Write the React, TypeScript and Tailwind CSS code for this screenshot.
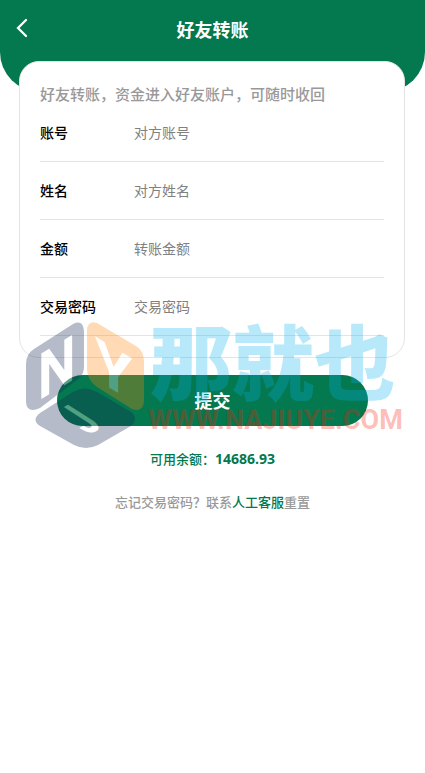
import React from "react";

type Field = { id: string; label: string; placeholder: string; type: string };

const fields: Field[] = [
  { id: "account", label: "账号", placeholder: "对方账号", type: "text" },
  { id: "name", label: "姓名", placeholder: "对方姓名", type: "text" },
  { id: "amount", label: "金额", placeholder: "转账金额", type: "text" },
  { id: "password", label: "交易密码", placeholder: "交易密码", type: "password" },
];

function Header() {
  return (
    <header className="h-[92px] rounded-b-[40px] bg-[#04784e] text-white">
      <div className="grid h-[60px] grid-cols-[48px_1fr_48px] items-center">
        <button type="button" aria-label="返回" className="flex h-10 items-center pb-1 pl-4">
          <svg width="12" height="20" viewBox="0 0 12 20" fill="none" stroke="currentColor" strokeWidth="2.3">
            <path d="M10 2 2 10l8 8" strokeLinecap="round" />
          </svg>
        </button>
        <h1 className="text-center text-lg font-bold">好友转账</h1>
      </div>
    </header>
  );
}

function FieldRow({ field }: { field: Field }) {
  return (
    <div className="flex h-[58px] items-start border-b border-[#e4e4e4] pt-[19px]">
      <label htmlFor={field.id} className="w-[94px] shrink-0 text-sm leading-5 font-medium text-black">
        {field.label}
      </label>
      <input
        id={field.id}
        type={field.type}
        placeholder={field.placeholder}
        className="h-5 min-w-0 flex-1 bg-transparent text-sm leading-5 outline-none placeholder:text-[#808080]"
      />
    </div>
  );
}

function CubeLogo() {
  return (
    <svg width="120" height="128" viewBox="0 0 120 128" opacity="0.3" fontFamily="Roboto, sans-serif" fontWeight="700">
      <path d="M8 27 L47 2 Q57-3 58 9 V45 Q58 53 51 58 L14 86 Q1 92 0 80 V42 Q0 32 8 27Z" fill="#122353" />
      <path d="M71 1 L110 24 Q118 29 118 40 V78 Q118 91 106 87 L71 65 Q61 58 61 47 V8 Q62-2 71 1Z" fill="#ff880c" />
      <path d="M14 91 L47 70 Q59 63 71 70 L105 90 Q113 97 105 104 L72 123 Q60 129 48 123 L14 104 Q5 98 14 91Z" fill="#122353" />
      <text transform="matrix(0.83 -0.5 0 1 12 79)" fontSize="64" fill="#fff">N</text>
      <text transform="matrix(1 0.6 0 1 69 57)" fontSize="60" fill="#fff">Y</text>
      <text transform="matrix(0.5 -0.3 0.9 0.58 63 113)" fontSize="54" fill="#fff">J</text>
    </svg>
  );
}

function Watermark() {
  return (
    <div className="pointer-events-none absolute top-[322px] left-[26px] flex whitespace-nowrap">
      <CubeLogo />
      <div className="pl-[2px]">
        <div className="pl-0.5 text-[82px] leading-[80px] font-black text-[#00aff0]/28">那就也</div>
        <div className="font-[Roboto,sans-serif] text-[27px] leading-9 font-bold text-[#fa1c05]/30">
          WWW.NAJIUYE.COM
        </div>
      </div>
    </div>
  );
}

export default function App() {
  return (
    <main className="relative min-h-screen overflow-hidden bg-white font-['Open_Sans','Noto_Sans_CJK_SC',sans-serif]">
      <Header />
      <form onSubmit={(e) => e.preventDefault()}>
        <section className="mr-5 ml-[19px] -mt-[31px] rounded-[20px] border border-[#e4e4e4] bg-white px-5 pt-[22px] pb-[21px]">
          <p className="text-[15px] leading-5 font-medium text-[#999]">好友转账，资金进入好友账户，可随时收回</p>
          {fields.map((f) => (
            <FieldRow key={f.id} field={f} />
          ))}
        </section>
        <div className="px-[57px] pt-[17px]">
          <button type="submit" className="h-[51px] w-full rounded-full bg-[#04784e] text-lg font-bold text-white">
            提交
          </button>
        </div>
      </form>
      <p className="mt-[23px] text-center text-[13px] leading-5 font-medium text-[#04784e]">
        可用余额：<span className="text-sm leading-5 font-bold">14686.93</span>
      </p>
      <p className="mt-[23px] text-center text-[13px] leading-5 font-medium text-[#999]">
        忘记交易密码？联系
        <a href="#service" className="text-[#04784e]">
          人工客服
        </a>
        重置
      </p>
      <Watermark />
    </main>
  );
}
